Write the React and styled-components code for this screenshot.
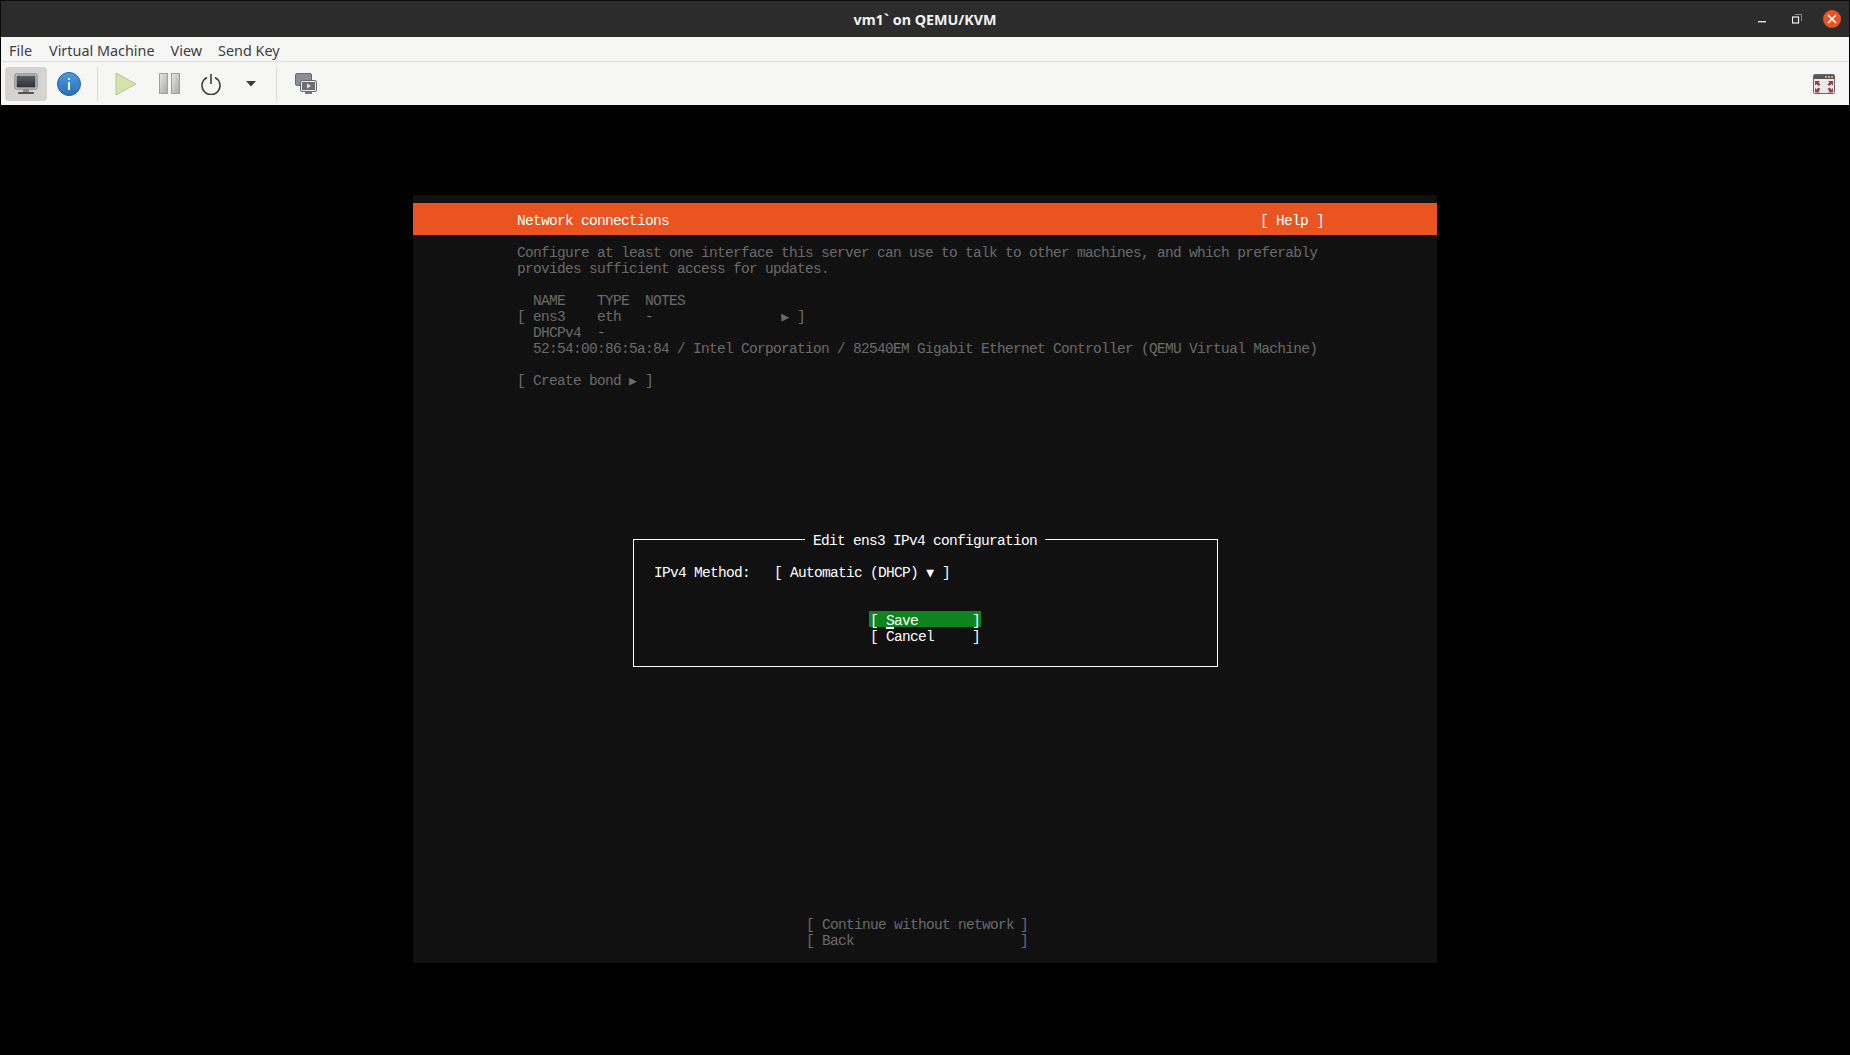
import styled, { createGlobalStyle } from 'styled-components'

const GlobalStyle = createGlobalStyle`
  html, body {
    margin: 0;
    padding: 0;
    background: #000;
  }
  #root {
    height: 1055px;
  }
`

const Window = styled.div`
  display: flex;
  flex-direction: column;
  width: 1850px;
  height: 1055px;
  overflow: hidden;
  box-sizing: border-box;
  background: #000;
  font-family: 'Noto Sans', 'Open Sans', sans-serif;
`

const TitleBar = styled.header`
  display: grid;
  grid-template-columns: 1fr auto 1fr;
  align-items: center;
  height: 37px;
  flex: none;
  box-sizing: border-box;
  background: #2c2c2c;
  border: 1px solid #0c0c0c;
  border-bottom: none;
  color: #f2f2f2;
  font-size: 14.3px;
  font-weight: 700;
`

const WindowTitle = styled.div`
  grid-column: 2;
`

const WindowControls = styled.div`
  grid-column: 3;
  justify-self: end;
  display: flex;
  align-items: center;
  gap: 21px;
  padding-right: 8px;
`

const MinimizeSlot = styled.div`
  display: flex;
  margin-right: 5px;
`

const CloseButton = styled.div`
  width: 18px;
  height: 18px;
  border-radius: 50%;
  background: #e95420;
  display: flex;
  align-items: center;
  justify-content: center;
`

const MenuBar = styled.nav`
  display: flex;
  align-items: center;
  gap: 16px;
  height: 25px;
  flex: none;
  box-sizing: border-box;
  padding: 2px 0 0 8px;
  margin: 0 1px;
  background: #f6f6f5;
  border-bottom: 1px solid #dfdedc;
  color: #3d3d3d;
  font-size: 14.4px;
`

const MenuItem = styled.span`
  &:first-child {
    margin-right: 1px;
  }
`

const Toolbar = styled.div`
  display: flex;
  align-items: center;
  height: 43px;
  flex: none;
  margin: 0 1px;
  padding: 0 4px;
  box-sizing: border-box;
  background: #f6f6f5;
`

const ToolButton = styled.div`
  display: flex;
  align-items: center;
  justify-content: center;
  width: ${p => p.$w || 42}px;
  height: 34px;
  border-radius: 4px;
  background: ${p => (p.$active ? '#d4d3d1' : 'transparent')};
`

const ToolSeparator = styled.div`
  width: 1px;
  height: 34px;
  margin: 0 ${p => p.$gap}px;
  background: #dcdbd9;
`

const ToolSpacer = styled.div`
  flex: 1;
`

const VmArea = styled.main`
  flex: 1;
  display: flex;
  justify-content: center;
  padding-top: 90px;
  background: #000;
`

const Screen = styled.section`
  display: flex;
  flex-direction: column;
  width: 1024px;
  height: 768px;
  box-sizing: border-box;
  padding: 8px 0 14px;
  background: #111;
  font-family: 'Liberation Mono', 'DejaVu Sans Mono', monospace;
  font-size: 14.5px;
  letter-spacing: -0.7px;
  line-height: 16px;
  color: #fff;
`

const HeaderBand = styled.div`
  display: flex;
  justify-content: space-between;
  height: 32px;
  box-sizing: border-box;
  padding: 10px 113px 0 104px;
  background: #e95420;
`

const Content = styled.div`
  flex: 1;
  display: flex;
  flex-direction: column;
  padding: 10px 0 0 104px;
  width: 808px;
`

const Line = styled.div`
  height: 16px;
  white-space: pre;
  color: ${p => (p.$dim ? '#6a6a6a' : '#fff')};
`

const Gap = styled.div`
  height: ${p => p.$rows * 16}px;
`

const Dialog = styled.fieldset`
  width: 585px;
  height: 134px;
  box-sizing: border-box;
  margin: 144px 0 0 116px;
  padding: 20px 0 0 20px;
  border: 1px solid #fff;
  min-inline-size: 0;
`

const DialogTitle = styled.legend`
  height: 12px;
  margin-left: 151px;
  padding: 0 8px;
  line-height: 16px;
`

const DialogButtons = styled.div`
  display: flex;
  flex-direction: column;
  width: 112px;
  margin: 30px 0 0 215px;
`

const MenuButton = styled.div`
  display: flex;
  justify-content: space-between;
  height: 16px;
  padding: 0 1px;
  line-height: 20px;
  white-space: pre;
  background: ${p => (p.$selected ? '#0e8420' : 'transparent')};
`

const MouseCursor = styled.span`
  box-shadow: inset 0 -2px 0 #fff;
`

const Footer = styled.div`
  display: flex;
  flex-direction: column;
  width: 224px;
  margin: auto 0 0 288px;
  color: #6a6a6a;
`

const FooterButton = styled.div`
  display: flex;
  justify-content: space-between;
  height: 16px;
  padding: 0 1px;
  white-space: pre;
`

const Arrow = styled.span`
  font-family: 'DejaVu Sans Mono', monospace;
  font-size: 13px;
  letter-spacing: 0;
  display: inline-block;
  width: 8px;
  text-align: center;
`

function MonitorIcon() {
  return (
    <svg width="24" height="22" viewBox="0 0 24 22">
      <defs>
        <linearGradient id="mon" x1="0" y1="0" x2="0" y2="1">
          <stop offset="0" stopColor="#5a6068" />
          <stop offset="1" stopColor="#2d3034" />
        </linearGradient>
      </defs>
      <rect x="1" y="1" width="22" height="15" rx="1.5" fill="#ececec" stroke="#6a6a6a" />
      <rect x="2.5" y="2.5" width="19" height="12" fill="url(#mon)" />
      <rect x="9" y="16" width="6" height="3" fill="#8a8a8a" />
      <rect x="4" y="19" width="16" height="2" rx="1" fill="#555" />
    </svg>
  )
}

function InfoIcon() {
  return (
    <svg width="24" height="24" viewBox="0 0 24 24">
      <defs>
        <linearGradient id="inf" x1="0" y1="0" x2="0" y2="1">
          <stop offset="0" stopColor="#4a9be0" />
          <stop offset="1" stopColor="#2a6fb8" />
        </linearGradient>
      </defs>
      <circle cx="12" cy="12" r="11.5" fill="url(#inf)" stroke="#2a62a0" />
      <rect x="11" y="10" width="2" height="8" fill="#e8f2fb" />
      <rect x="11" y="6" width="2" height="2" fill="#e8f2fb" />
    </svg>
  )
}

function PlayIcon() {
  return (
    <svg width="22" height="24" viewBox="0 0 22 24">
      <path d="M1 1 L21 12 L1 23 Z" fill="#d6e2ae" stroke="#b9c98c" />
    </svg>
  )
}

function PauseIcon() {
  return (
    <svg width="21" height="22" viewBox="0 0 21 22">
      <defs>
        <linearGradient id="pau" x1="0" y1="0" x2="1" y2="1">
          <stop offset="0" stopColor="#e6e6e4" />
          <stop offset="1" stopColor="#a8a8a6" />
        </linearGradient>
      </defs>
      <rect x="0.5" y="0.5" width="8" height="20" fill="url(#pau)" stroke="#a0a09e" />
      <rect x="12.5" y="0.5" width="8" height="20" fill="url(#pau)" stroke="#a0a09e" />
    </svg>
  )
}

function PowerIcon() {
  return (
    <svg width="22" height="22" viewBox="0 0 22 22" fill="none" stroke="#3c3c3c" strokeWidth="1.6">
      <path d="M7 4.5 A9 9 0 1 0 15 4.5" />
      <path d="M11 1 V11" />
    </svg>
  )
}

function CaretIcon() {
  return (
    <svg width="10" height="6" viewBox="0 0 10 6">
      <path d="M0 0 H10 L5 5.5 Z" fill="#3c3c3c" />
    </svg>
  )
}

function CloneIcon() {
  return (
    <svg width="22" height="22" viewBox="0 0 22 22">
      <rect x="0.5" y="0.5" width="16" height="12" rx="1.5" fill="#8b8f93" stroke="#6b6b6b" />
      <rect x="5.5" y="7.5" width="16" height="11" rx="1.5" fill="#e8e8e8" stroke="#6b6b6b" />
      <rect x="7" y="9" width="13" height="8" fill="#6a7076" />
      <path d="M12 10.5 L16 13 L12 15.5 Z" fill="#e4e4e4" />
      <rect x="10" y="19" width="7" height="2" fill="#777" />
    </svg>
  )
}

function FullscreenIcon() {
  return (
    <svg width="22" height="20" viewBox="0 0 22 20">
      <rect x="0.5" y="0.5" width="21" height="19" rx="1" fill="#e9e9e7" stroke="#666" />
      <rect x="1" y="1" width="20" height="4" fill="#55575a" />
      <rect x="12" y="2" width="2" height="2" fill="#d8a860" />
      <rect x="15" y="2" width="2" height="2" fill="#d8a860" />
      <rect x="18" y="2" width="2" height="2" fill="#d8a860" />
      <path d="M2 7 H7 L5.5 8.5 L7.5 10.5 L5.5 12 L3.5 10 L2 11.5 Z" fill="#a03a48" />
      <path d="M20 7 H15 L16.5 8.5 L14.5 10.5 L16.5 12 L18.5 10 L20 11.5 Z" fill="#a03a48" />
      <path d="M2 18.5 H7 L5.5 17 L7.5 15 L5.5 13.5 L3.5 15.5 L2 14 Z" fill="#a03a48" />
      <path d="M20 18.5 H15 L16.5 17 L14.5 15 L16.5 13.5 L18.5 15.5 L20 14 Z" fill="#a03a48" />
    </svg>
  )
}

function MinimizeIcon() {
  return (
    <svg width="8" height="10" viewBox="0 0 8 10">
      <rect x="0" y="7" width="8" height="1.4" fill="#e6e6e6" />
    </svg>
  )
}

function RestoreIcon() {
  return (
    <svg width="10" height="10" viewBox="0 0 10 10" fill="none" stroke="#f0f0f0">
      <rect x="0.5" y="3" width="6" height="6" strokeWidth="1.2" />
      <path d="M3 0.5 H9.5 V7" stroke="#8a8a8a" />
    </svg>
  )
}

function CloseIcon() {
  return (
    <svg width="10" height="10" viewBox="0 0 10 10" stroke="#fff" strokeWidth="1.6">
      <path d="M1 1 L9 9 M9 1 L1 9" />
    </svg>
  )
}

export default function App() {
  return (
    <Window>
      <GlobalStyle />
      <TitleBar>
        <WindowTitle>vm1` on QEMU/KVM</WindowTitle>
        <WindowControls>
          <MinimizeSlot><MinimizeIcon /></MinimizeSlot>
          <RestoreIcon />
          <CloseButton><CloseIcon /></CloseButton>
        </WindowControls>
      </TitleBar>

      <MenuBar>
        <MenuItem>File</MenuItem>
        <MenuItem>Virtual Machine</MenuItem>
        <MenuItem>View</MenuItem>
        <MenuItem>Send Key</MenuItem>
      </MenuBar>

      <Toolbar>
        <ToolButton $active><MonitorIcon /></ToolButton>
        <ToolButton $w={44}><InfoIcon /></ToolButton>
        <ToolSeparator $gap={6} />
        <ToolButton $w={44}><PlayIcon /></ToolButton>
        <ToolButton><PauseIcon /></ToolButton>
        <ToolButton><PowerIcon /></ToolButton>
        <ToolButton $w={38}><CaretIcon /></ToolButton>
        <ToolSeparator $gap={6} />
        <ToolButton $w={45}><CloneIcon /></ToolButton>
        <ToolSpacer />
        <ToolButton><FullscreenIcon /></ToolButton>
      </Toolbar>

      <VmArea>
        <Screen>
          <HeaderBand>
            <span>Network connections</span>
            <span>[ Help ]</span>
          </HeaderBand>
          <Content>
            <Line $dim>Configure at least one interface this server can use to talk to other machines, and which preferably</Line>
            <Line $dim>provides sufficient access for updates.</Line>
            <Gap $rows={1} />
            <Line $dim>  NAME    TYPE  NOTES</Line>
            <Line $dim>[ ens3    eth   -                <Arrow>▶</Arrow> ]</Line>
            <Line $dim>  DHCPv4  -</Line>
            <Line $dim>  52:54:00:86:5a:84 / Intel Corporation / 82540EM Gigabit Ethernet Controller (QEMU Virtual Machine)</Line>
            <Gap $rows={1} />
            <Line $dim>[ Create bond <Arrow>▶</Arrow> ]</Line>

            <Dialog>
              <DialogTitle>Edit ens3 IPv4 configuration</DialogTitle>
              <Line>IPv4 Method:   [ Automatic (DHCP) <Arrow>▼</Arrow> ]</Line>
              <DialogButtons>
                <MenuButton $selected>
                  <span>[ <MouseCursor>S</MouseCursor>ave</span>
                  <span>]</span>
                </MenuButton>
                <MenuButton>
                  <span>[ Cancel</span>
                  <span>]</span>
                </MenuButton>
              </DialogButtons>
            </Dialog>

            <Footer>
              <FooterButton>
                <span>[ Continue without network</span>
                <span>]</span>
              </FooterButton>
              <FooterButton>
                <span>[ Back</span>
                <span>]</span>
              </FooterButton>
            </Footer>
          </Content>
        </Screen>
      </VmArea>
    </Window>
  )
}
